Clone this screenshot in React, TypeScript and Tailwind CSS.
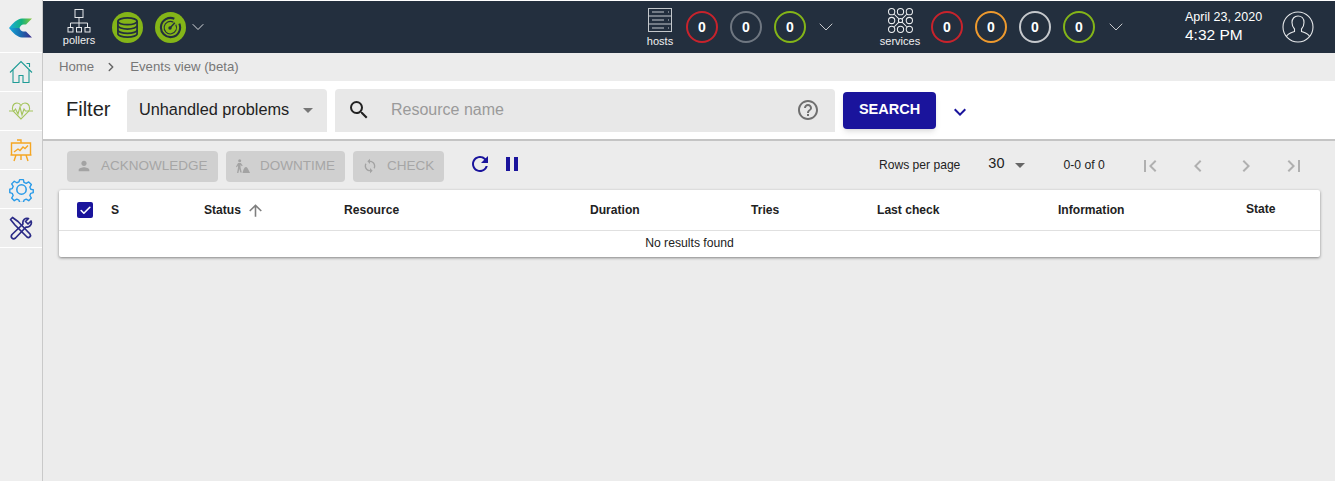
import { ChevronDown, ChevronRight, Check } from "lucide-react";
import {
  MdArrowUpward,
  MdChevronLeft,
  MdChevronRight,
  MdExpandMore,
  MdFirstPage,
  MdHelpOutline,
  MdLastPage,
  MdPause,
  MdPerson,
  MdRefresh,
  MdSearch,
  MdSync,
} from "react-icons/md";

const font = "font-['Liberation_Sans',Arial,sans-serif]";

function Counter({ color, label = "0" }: { color: string; label?: string }) {
  return (
    <div className={`w-[32px] h-[32px] rounded-full border-2 flex items-center justify-center text-white text-[14px] font-bold ${color}`}>
      {label}
    </div>
  );
}

function SideItem({ children }: { children: React.ReactNode }) {
  return <div className="h-[39px] border-b border-white flex items-center justify-center">{children}</div>;
}

function Logo() {
  return (
    <svg width="24" height="20" viewBox="0 0 24 20">
      <defs>
        <linearGradient id="logoTop" x1="0" y1="0" x2="1" y2="0">
          <stop offset="0" stopColor="#18a9e0" />
          <stop offset="0.55" stopColor="#12b27c" />
          <stop offset="1" stopColor="#8cc63f" />
        </linearGradient>
        <linearGradient id="logoBottom" x1="0" y1="0" x2="1" y2="0">
          <stop offset="0" stopColor="#12a8d8" />
          <stop offset="0.5" stopColor="#1a6cb0" />
          <stop offset="1" stopColor="#3c2a8c" />
        </linearGradient>
      </defs>
      <path d="M0 10 C4 5 8 1 13 0.500 L23 0.500 L17 6.500 L14 6.500 C12 7 11 8.500 10.500 10 L0 10Z" fill="url(#logoTop)" />
      <path d="M0 10 L10.500 10 C11 11.500 12 13 14 13.500 L17 13.500 L23 19.500 L13 19.500 C8 19 4 15 0 10Z" fill="url(#logoBottom)" />
    </svg>
  );
}

function PollersIcon() {
  return (
    <svg width="24" height="24" viewBox="0 0 24 24" fill="none" stroke="#e6e8ea" strokeWidth="1">
      <rect x="8" y="0.500" width="8" height="8" />
      <path d="M12 9v5M3.500 18v-4h17v4M12 14v4" />
      <rect x="1" y="18.500" width="5" height="4.500" />
      <rect x="9.500" y="18.500" width="5" height="4.500" />
      <rect x="18" y="18.500" width="5" height="4.500" />
    </svg>
  );
}

function DatabaseCircle() {
  return (
    <div className="w-[31px] h-[31px] rounded-full bg-[#84b518] flex items-center justify-center">
      <svg width="23" height="23" viewBox="0 0 24 24" fill="none" stroke="#232f3e" strokeWidth="1.800">
        <ellipse cx="12" cy="5.500" rx="10" ry="3.600" />
        <path d="M2 5.500v13c0 2 4.500 3.600 10 3.600s10-1.600 10-3.600v-13" />
        <path d="M2 10c0 2 4.500 3.600 10 3.600S22 12 22 10M2 14.500c0 2 4.500 3.600 10 3.600s10-1.600 10-3.600" />
      </svg>
    </div>
  );
}

function GaugeCircle() {
  return (
    <div className="w-[31px] h-[31px] rounded-full bg-[#84b518] flex items-center justify-center">
      <svg width="23" height="23" viewBox="0 0 24 24" fill="none" stroke="#232f3e" strokeWidth="2.200">
        <path d="M16 2.800A10 10 0 1 0 21.200 8" />
        <path d="M15 6.500A6.500 6.500 0 1 0 17.500 9" strokeWidth="1.100" />
        <circle cx="11.500" cy="12.500" r="1.800" fill="#232f3e" strokeWidth="0" />
        <path d="M11.500 12.500L16.500 7" strokeWidth="1.500" />
      </svg>
    </div>
  );
}

function HostsIcon() {
  return (
    <svg width="24" height="24" viewBox="0 0 24 24" fill="none" stroke="#c4c8cc" strokeWidth="1">
      <rect x="0.500" y="0.500" width="23" height="23" />
      <path d="M0.500 8h23M0.500 16h23M4 4h12M4 12h12M4 20h12M20 4h1M20 12h1M20 20h1" />
    </svg>
  );
}

function ServicesIcon() {
  const pts = [3.500, 12, 20.500];
  return (
    <svg width="25" height="25" viewBox="0 0 24 24" fill="none" stroke="#eef0f2" strokeWidth="1">
      {pts.map((y) => pts.map((x) => <circle key={`${x}-${y}`} cx={x} cy={y} r={x === 12 && y === 12 ? 2 : 3} />))}
      <path d="M6 6l4.500 4.500M18 6l-4.500 4.500M6 18l4.500-4.500M18 18l-4.500-4.500" />
    </svg>
  );
}

function ProfileIcon() {
  return (
    <svg width="32" height="32" viewBox="0 0 32 32" fill="none" stroke="#e6e8ea" strokeWidth="1.100">
      <circle cx="16" cy="16" r="15" />
      <path d="M4.500 25.500c1-3 4-3.600 8-5v-2.500c-1.600-1.500-2.500-3.500-2.500-6.500 0-4 2.500-6.500 6-6.500s6 2.500 6 6.500c0 3-.9 5-2.500 6.500v2.500c4 1.400 7 2 8 5" />
    </svg>
  );
}

function DowntimeIcon() {
  return (
    <svg width="16" height="16" viewBox="0 0 17 16" fill="#a3a3a3">
      <circle cx="5" cy="2.500" r="1.600" />
      <path d="M3.200 4.800h3l2 2.700-.9.700-1.400-1.400v2.700l1.300 5.500H5.600L4.600 11l-1 4.500H2.200l1-6V7.500L2 9.300l-1-.6z" />
      <path d="M11.500 9c1.500 0 2.500 2 4.500 6.500H8c.5-3 2-6.500 3.500-6.500z" />
    </svg>
  );
}

function ActionButton({ icon, label, width }: { icon: React.ReactNode; label: string; width: string }) {
  return (
    <div className={`h-[31px] rounded-[4px] bg-[#d0d0d0] flex items-center pl-[9px] gap-[9px] text-[13.5px] text-[#a6a6a6] ${width}`}>
      {icon}
      <span>{label}</span>
    </div>
  );
}

function PagerIcon({ children }: { children: React.ReactNode }) {
  return <div className="w-[48px] flex justify-center text-[#b0b0b0] text-[24px]">{children}</div>;
}

const columns = [
  { label: "S", width: "w-[93px]" },
  { label: "Status", width: "w-[140px]" },
  { label: "Resource", width: "w-[246px]" },
  { label: "Duration", width: "w-[161px]" },
  { label: "Tries", width: "w-[126px]" },
  { label: "Last check", width: "w-[181px]" },
  { label: "Information", width: "w-[188px]" },
  { label: "State", width: "w-[60px] mb-[2px]" },
];

export default function App() {
  return (
    <div className={`${font} w-[1335px] h-[481px] flex bg-[#ececec] overflow-hidden`}>
      <aside className="w-[43px] shrink-0 bg-[#eeeeee] border-r border-[#c9c9c9] flex flex-col">
        <div className="h-[53px] border-b border-white flex items-center justify-center pt-[3px]">
          <Logo />
        </div>
        <SideItem>
          <svg width="24" height="24" viewBox="0 0 24 24" fill="none" stroke="#1f9c96" strokeWidth="1.100">
            <path d="M1 12.500L12 1.500l11 11M4 10v12.500h6v-7h4v7h6V10M17.500 3.500h3v3.500" />
          </svg>
        </SideItem>
        <SideItem>
          <svg width="26" height="18" viewBox="0 0 26 18" fill="none" stroke="#a4c45c" strokeWidth="1.100">
            <path d="M1 9h5l1.500-2L10 12l2-7 2 8 2-6 1.500 2H25" />
            <path d="M13 17L5.500 9.500C3 6 5 1 9 1c2 0 3.200 1 4 2.500C13.800 2 15 1 17 1c4 0 6 5 3.500 8.500z" />
          </svg>
        </SideItem>
        <SideItem>
          <svg width="22" height="24" viewBox="0 0 22 24" fill="none" stroke="#f5a623" strokeWidth="1.400">
            <path d="M1.500 5h19v12h-19zM0.500 17h21M11 5V2h-4M4 23l2-6M18 23l-2-6M11 22v-5" />
            <path d="M4 14l4-3 2 1.500 3-3.500 2 1.500 3-3" />
          </svg>
        </SideItem>
        <SideItem>
          <svg width="25" height="25" viewBox="0 0 24 24" fill="none" stroke="#2a9be8" strokeWidth="1.500" strokeLinejoin="round">
            <path d="M10 1.500h4l.7 3 2.300 1 2.700-1.600 2.800 2.800-1.600 2.700 1 2.300 3 .7v0h-.4v3l-2.600.7-1 2.300 1.600 2.700-2.800 2.800-2.700-1.600-2.300 1-.7 2.600h-4l-.7-2.600-2.300-1-2.700 1.600-2.800-2.800 1.600-2.700-1-2.300-2.600-.7v-3.700l2.600-.7 1-2.300-1.600-2.700 2.800-2.800 2.700 1.600 2.300-1z" transform="translate(1.200 1.200) scale(0.9)" />
            <circle cx="12" cy="12" r="4.500" />
          </svg>
        </SideItem>
        <SideItem>
          <svg width="24" height="24" viewBox="0 0 24 24" fill="none" stroke="#2a2a86" strokeWidth="1.700" strokeLinejoin="round">
            <path d="M1.500 3.500l2-2 5.500 4 12 12.500c1.500 2-1 4.500-3 3L6 9z" />
            <path d="M22 5l-3 3-2.500-2.500 3-3c-3-1-6.500 1.500-5.500 5.500L3 18.500c-2 3 1 5.500 3.500 3.500L17 11c3 1 6.500-2.500 5-6z" />
          </svg>
        </SideItem>
      </aside>

      <div className="flex-1 flex flex-col min-w-0">
        <div className="h-[1px] bg-white" />
        <header className="h-[52px] bg-[#232f3e] flex items-center text-white">
          <div className="w-[44px] ml-[14px] flex flex-col items-center">
            <PollersIcon />
            <span className="text-[11px] leading-[11px] text-[#f0f0f0] mt-[2px]">pollers</span>
          </div>
          <div className="ml-[11px]"><DatabaseCircle /></div>
          <div className="ml-[12px]"><GaugeCircle /></div>
          <ChevronDown className="ml-[2px] w-[20px] h-[20px] text-[#d8dadd]" strokeWidth={1.200} />

          <div className="ml-[436px] w-[32px] flex flex-col items-center">
            <HostsIcon />
            <span className="text-[11px] leading-[11px] text-[#f0f0f0] mt-[4px]">hosts</span>
          </div>
          <div className="ml-[10px] flex gap-[12px]">
            <Counter color="border-[#c8232c]" />
            <Counter color="border-[#6f7781]" />
            <Counter color="border-[#84b518]" />
          </div>
          <ChevronDown className="ml-[8px] w-[24px] h-[24px] text-[#c8cacc]" strokeWidth={1} />

          <div className="ml-[42px] w-[40px] flex flex-col items-center">
            <ServicesIcon />
            <span className="text-[11px] leading-[11px] text-[#f0f0f0] mt-[3px]">services</span>
          </div>
          <div className="ml-[11px] flex gap-[12px]">
            <Counter color="border-[#c8232c]" />
            <Counter color="border-[#ee9a2e]" />
            <Counter color="border-[#c5c8cc]" />
            <Counter color="border-[#84b518]" />
          </div>
          <ChevronDown className="ml-[9px] w-[24px] h-[24px] text-[#c8cacc]" strokeWidth={1} />

          <div className="ml-[57px] w-[84px] flex flex-col">
            <span className="text-[12.5px] leading-[16px]">April 23, 2020</span>
            <span className="text-[15.5px] leading-[20px]">4:32 PM</span>
          </div>
          <div className="ml-[13px]"><ProfileIcon /></div>
        </header>

        <nav className="h-[28px] flex items-center pl-[16px] text-[13.2px] text-[#777777]">
          <span>Home</span>
          <ChevronRight className="ml-[10px] w-[14px] h-[14px] text-[#666666]" strokeWidth={2.500} />
          <span className="ml-[12px]">Events view (beta)</span>
        </nav>

        <section className="h-[60px] bg-white border-b-2 border-[#c4c4c4] flex items-center pl-[23px]">
          <span className="text-[20px] text-[#222222] w-[61px] mb-[3px]">Filter</span>
          <div className="w-[200px] h-[43px] bg-[#e8e8e8] rounded-t-[4px] flex items-center pl-[12px] text-[16.3px] text-[#222222]">
            <span className="mb-[2px]">Unhandled problems</span>
            <span className="ml-[14px] w-0 h-0 border-x-[5.5px] border-x-transparent border-t-[5px] border-t-[#777777]" />
          </div>
          <div className="ml-[8px] w-[500px] h-[43px] bg-[#e8e8e8] rounded-t-[4px] flex items-center pl-[12px] text-[16px] text-[#9a9a9a]">
            <MdSearch className="w-[24px] h-[24px] text-[#222222]" />
            <span className="ml-[20px]">Resource name</span>
            <MdHelpOutline className="ml-auto mr-[15px] w-[24px] h-[24px] text-[#6f6f6f]" />
          </div>
          <div className="ml-[8px] w-[93px] h-[37px] bg-[#1a149c] rounded-[4px] shadow-md flex items-center justify-center text-[14.5px] font-bold text-white mt-[1px] pb-[2px]">
            SEARCH
          </div>
          <MdExpandMore className="ml-[12px] w-[24px] h-[24px] text-[#1a149c] mt-[4px]" />
        </section>

        <section className="h-[49px] flex items-center pl-[24px]">
          <div className="flex gap-[8px] mt-[1px]">
            <ActionButton width="w-[151px]" label="ACKNOWLEDGE" icon={<MdPerson className="w-[16px] h-[16px] text-[#a3a3a3]" />} />
            <ActionButton width="w-[119px]" label="DOWNTIME" icon={<DowntimeIcon />} />
            <ActionButton width="w-[91px]" label="CHECK" icon={<MdSync className="w-[16px] h-[16px] text-[#a3a3a3]" />} />
          </div>
          <MdRefresh className="ml-[24px] mb-[4px] w-[24px] h-[24px] text-[#1a149c]" />
          <MdPause className="ml-[8px] mb-[4px] w-[24px] h-[24px] text-[#1a149c]" />
          <span className="ml-[355px] text-[12.1px] text-[#222222]">Rows per page</span>
          <span className="ml-[28px] text-[14.5px] text-[#222222] mb-[3px]">30</span>
          <span className="ml-[11px] w-0 h-0 border-x-[5.5px] border-x-transparent border-t-[5px] border-t-[#666666]" />
          <span className="ml-[38px] text-[12.2px] text-[#222222] w-[58px]">0-0 of 0</span>
          <div className="ml-[5px] flex">
            <PagerIcon><MdFirstPage /></PagerIcon>
            <PagerIcon><MdChevronLeft /></PagerIcon>
            <PagerIcon><MdChevronRight /></PagerIcon>
            <PagerIcon><MdLastPage /></PagerIcon>
          </div>
        </section>

        <div className="ml-[16px] w-[1261px] bg-white rounded-[2px] shadow-[0_1px_3px_rgba(0,0,0,0.45)]">
          <div className="h-[41px] border-b border-[#e0e0e0] flex items-center pl-[18px] text-[12.1px] font-bold text-[#222222]">
            <div className="w-[16px] h-[16px] rounded-[2px] bg-[#1a149c] flex items-center justify-center mr-[18px]">
              <Check className="w-[13px] h-[13px] text-white" strokeWidth={3} />
            </div>
            {columns.map((c) => (
              <div key={c.label} className={`${c.width} flex items-center gap-[5px]`}>
                <span>{c.label}</span>
                {c.label === "Status" && <MdArrowUpward className="w-[19px] h-[19px] text-[#7f7f7f]" />}
              </div>
            ))}
          </div>
          <div className="h-[26px] pb-[2px] flex items-center justify-center text-[12.2px] text-[#222222]">No results found</div>
        </div>
      </div>
    </div>
  );
}
